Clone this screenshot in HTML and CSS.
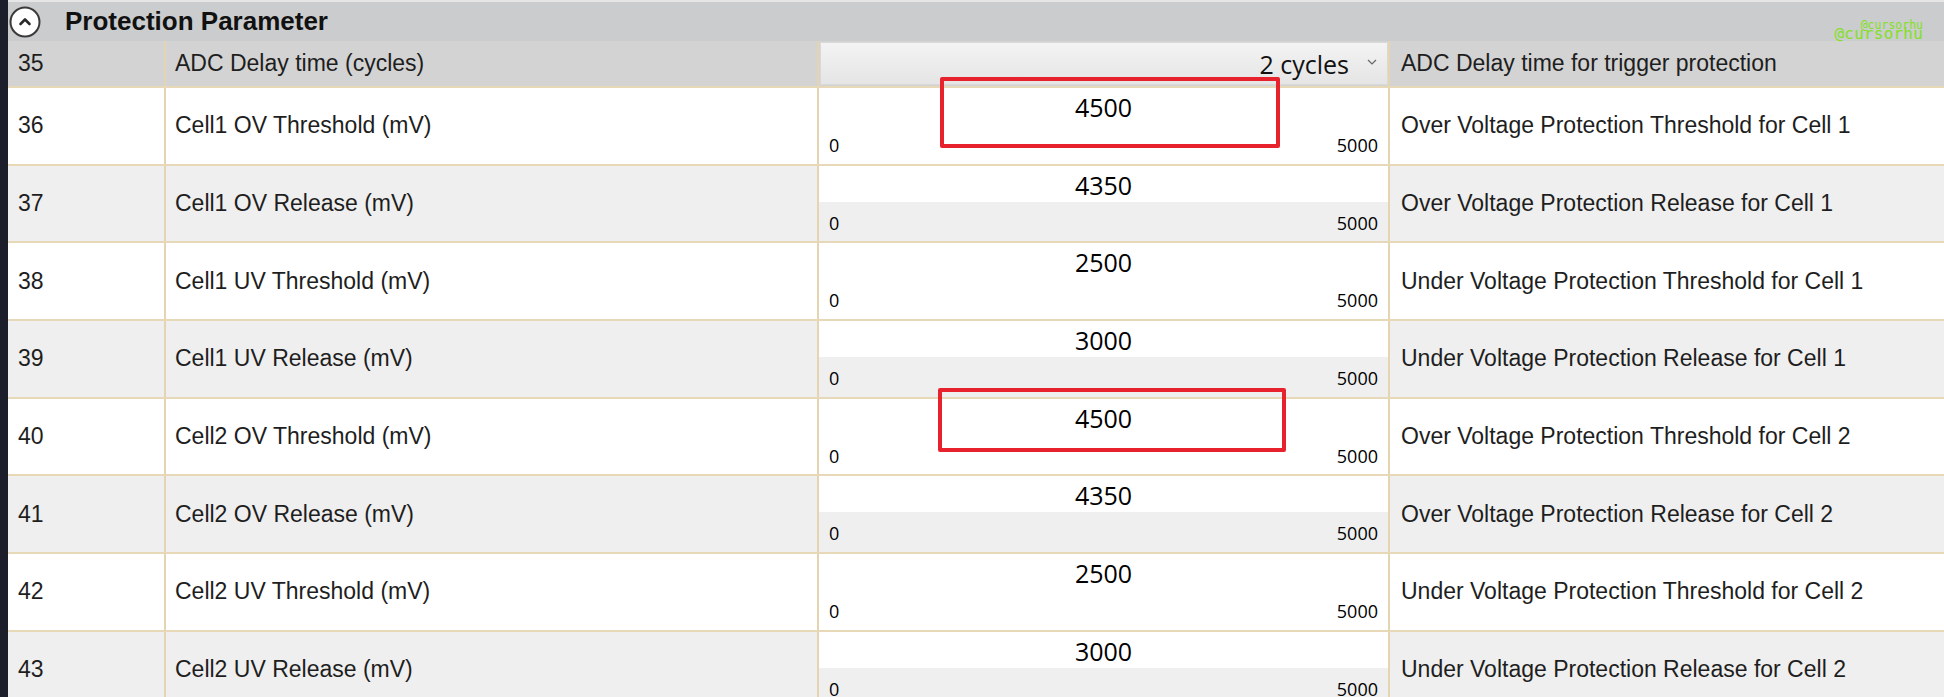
FILE: index.html
```html
<html>
  <head>
    <title>Protection Parameter</title>
    <link rel="stylesheet" href="styles.css">
  </head>
  <body>
    <div class="page">
      <div class="sideStrip"></div>
      <div class="panel">
        <div class="groupHeader">
          <span class="collapseBtn">
            <svg width="32" height="32" viewBox="0 0 32 32">
              <circle cx="16" cy="16" r="14.5" fill="#ffffff" stroke="#3a3a3a" stroke-width="2"/>
              <path d="M11.5 18 L16 13.5 L20.5 18" fill="none" stroke="#2a2a2a" stroke-width="2.6" stroke-linecap="round" stroke-linejoin="round"/>
            </svg>
          </span>
          <span class="groupTitle">Protection Parameter</span>
        </div>

        <div class="row rowSelected rowFirst">
          <div class="cell cellNum">35</div>
          <div class="cell cellName">ADC Delay time (cycles)</div>
          <div class="cell cellValue">
            <div class="comboBox">
              <span>2 cycles</span>
              <svg class="comboArrow" width="10" height="6" viewBox="0 0 10 6">
                <path d="M1 1 L5 5 L9 1" fill="none" stroke="#666" stroke-width="1.2"/>
              </svg>
            </div>
          </div>
          <div class="cell cellDesc">ADC Delay time for trigger protection</div>
        </div>

        <div class="row">
          <div class="cell cellNum">36</div>
          <div class="cell cellName">Cell1 OV Threshold (mV)</div>
          <div class="cell cellValue">
            <div class="valueBox">4500</div>
            <div class="rangeLabels"><span>0</span><span>5000</span></div>
          </div>
          <div class="cell cellDesc">Over Voltage Protection Threshold for Cell 1</div>
        </div>

        <div class="row rowAlt">
          <div class="cell cellNum">37</div>
          <div class="cell cellName">Cell1 OV Release (mV)</div>
          <div class="cell cellValue">
            <div class="valueBox">4350</div>
            <div class="rangeLabels"><span>0</span><span>5000</span></div>
          </div>
          <div class="cell cellDesc">Over Voltage Protection Release for Cell 1</div>
        </div>

        <div class="row">
          <div class="cell cellNum">38</div>
          <div class="cell cellName">Cell1 UV Threshold (mV)</div>
          <div class="cell cellValue">
            <div class="valueBox">2500</div>
            <div class="rangeLabels"><span>0</span><span>5000</span></div>
          </div>
          <div class="cell cellDesc">Under Voltage Protection Threshold for Cell 1</div>
        </div>

        <div class="row rowAlt">
          <div class="cell cellNum">39</div>
          <div class="cell cellName">Cell1 UV Release (mV)</div>
          <div class="cell cellValue">
            <div class="valueBox">3000</div>
            <div class="rangeLabels"><span>0</span><span>5000</span></div>
          </div>
          <div class="cell cellDesc">Under Voltage Protection Release for Cell 1</div>
        </div>

        <div class="row">
          <div class="cell cellNum">40</div>
          <div class="cell cellName">Cell2 OV Threshold (mV)</div>
          <div class="cell cellValue">
            <div class="valueBox">4500</div>
            <div class="rangeLabels"><span>0</span><span>5000</span></div>
          </div>
          <div class="cell cellDesc">Over Voltage Protection Threshold for Cell 2</div>
        </div>

        <div class="row rowAlt">
          <div class="cell cellNum">41</div>
          <div class="cell cellName">Cell2 OV Release (mV)</div>
          <div class="cell cellValue">
            <div class="valueBox">4350</div>
            <div class="rangeLabels"><span>0</span><span>5000</span></div>
          </div>
          <div class="cell cellDesc">Over Voltage Protection Release for Cell 2</div>
        </div>

        <div class="row">
          <div class="cell cellNum">42</div>
          <div class="cell cellName">Cell2 UV Threshold (mV)</div>
          <div class="cell cellValue">
            <div class="valueBox">2500</div>
            <div class="rangeLabels"><span>0</span><span>5000</span></div>
          </div>
          <div class="cell cellDesc">Under Voltage Protection Threshold for Cell 2</div>
        </div>

        <div class="row rowAlt">
          <div class="cell cellNum">43</div>
          <div class="cell cellName">Cell2 UV Release (mV)</div>
          <div class="cell cellValue">
            <div class="valueBox">3000</div>
            <div class="rangeLabels"><span>0</span><span>5000</span></div>
          </div>
          <div class="cell cellDesc">Under Voltage Protection Release for Cell 2</div>
        </div>
      </div>
    </div>

    <!-- annotations drawn over the screenshot -->
    <div class="markBox markOne"></div>
    <div class="markBox markTwo"></div>
    <div class="watermark">
      <span class="wmSmall">@cursorhu</span>
      <span class="wmBig">@cursorhu</span>
    </div>
  </body>
</html>
```

FILE: styles.css
```css
body {
  margin: 0;
  height: 697px;
  overflow: hidden;
  background-color: #ffffff;
  font-family: "Liberation Sans", Arial, sans-serif;
  color: #1e1e1e;
}

.page {
  display: flex;
  height: 100%;
}

.sideStrip {
  width: 8px;
  flex-shrink: 0;
  background-color: #1c1f2b;
}

.panel {
  flex: 1;
  display: flex;
  flex-direction: column;
}

.groupHeader {
  height: 41px;
  flex-shrink: 0;
  box-sizing: border-box;
  border-top: 2px solid #e6e6e6;
  background-color: #cbcccd;
  display: flex;
  align-items: center;
  padding-left: 1px;
}

.collapseBtn {
  width: 32px;
  height: 32px;
  display: flex;
}

.groupTitle {
  margin-left: 24px;
  font-size: 26px;
  font-weight: bold;
  color: #111111;
}

.row {
  display: grid;
  grid-template-columns: 156px 653px 571px 1fr;
  height: 77.7px;
  box-sizing: border-box;
  border-bottom: 2px solid #e7d9b7;
  background-color: #ffffff;
  flex-shrink: 0;
}

.rowAlt {
  background-color: #efefef;
}

.rowSelected {
  background-color: #d3d3d3;
}

.rowFirst {
  height: 47px;
}

.cell {
  display: flex;
  align-items: center;
  font-size: 23px;
  box-sizing: border-box;
}

.cellNum {
  padding-left: 10px;
}

.cellName {
  border-left: 2px solid #e4d5b0;
  padding-left: 9px;
}

.cellDesc {
  border-left: 2px solid #e4d5b0;
  padding-left: 11px;
  white-space: nowrap;
}

.cellValue {
  border-left: 2px solid #e4d5b0;
  flex-direction: column;
  align-items: stretch;
  font-family: "Open Sans", "Noto Sans", sans-serif;
  color: #000000;
}

.comboBox {
  flex: 1;
  margin: 1px 0 1px 1px;
  border: 1px solid #d9d9d9;
  background: linear-gradient(#f3f3f3, #e5e5e5);
  display: flex;
  align-items: center;
  justify-content: flex-end;
  padding-right: 10px;
  font-size: 25px;
  color: #111111;
}

.comboArrow {
  margin-left: 18px;
  margin-top: -4px;
}

.valueBox {
  height: 36px;
  padding-top: 2px;
  box-sizing: border-box;
  background-color: #ffffff;
  display: flex;
  align-items: center;
  justify-content: center;
  font-size: 25px;
}

.rangeLabels {
  flex: 1;
  display: flex;
  align-items: center;
  justify-content: space-between;
  padding: 2px 10px 0 10px;
  font-size: 18px;
}

.markBox {
  position: absolute;
  box-sizing: border-box;
  border: 4px solid #e8222d;
  border-radius: 2px;
}

.markOne {
  left: 940px;
  top: 77px;
  width: 340px;
  height: 71px;
}

.markTwo {
  left: 938px;
  top: 388px;
  width: 348px;
  height: 64px;
}

.watermark {
  position: absolute;
  right: 21px;
  top: 18px;
  width: 120px;
  height: 28px;
  font-family: "DejaVu Sans Mono", monospace;
  color: #82e021;
}

.wmSmall {
  position: absolute;
  right: 0;
  top: 0;
  font-size: 11.5px;
}

.wmBig {
  position: absolute;
  right: 0;
  top: 6px;
  font-size: 16px;
  letter-spacing: 0.2px;
}
```
